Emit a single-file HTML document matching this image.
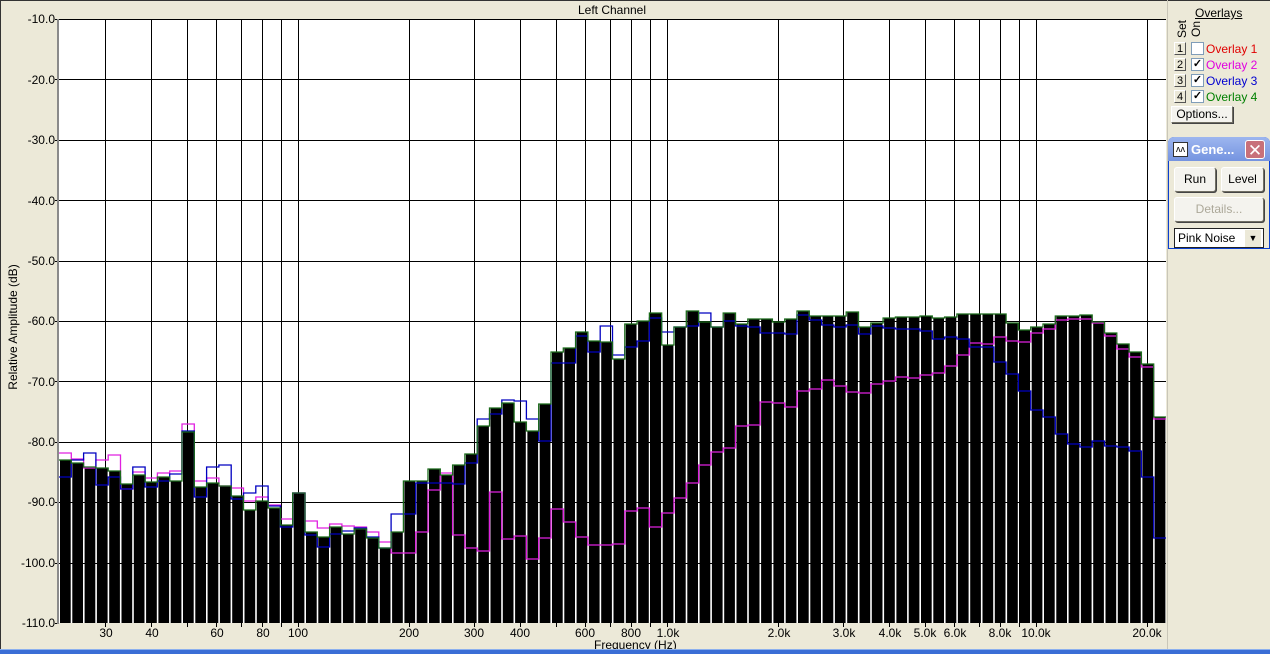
<!DOCTYPE html>
<html><head><meta charset="utf-8"><style>
body{margin:0;width:1270px;height:653px;overflow:hidden;background:#ece9d8;font-family:"Liberation Sans",sans-serif;position:relative}
.a{position:absolute}
.btn{position:absolute;background:#f4f3ee;border:1px solid #fff;border-right-color:#716f64;border-bottom-color:#716f64;box-shadow:1px 1px 0 #444;font-size:12px;text-align:center;box-sizing:border-box;color:#000}
.yl{position:absolute;right:1215px;font-size:12px;width:60px;text-align:right}
.xl{position:absolute;top:626px;font-size:12px;transform:translateX(-50%)}
.ov{position:absolute;left:1206px;font-size:12px}
.cb{position:absolute;left:1191px;width:11px;height:11px;background:#fff;border:1px solid #7f9db9;font-size:11px;line-height:10px;text-align:center;font-weight:bold}
.sb{position:absolute;left:1174px;width:12px;height:13px;background:#ece9d8;border:1px solid #fff;border-right-color:#555;border-bottom-color:#555;font-size:11px;line-height:12px;text-align:center;box-sizing:border-box}
</style></head><body>
<div class="a" style="left:0;top:0;width:1270px;height:1px;background:#333"></div>
<div class="a" style="left:0;top:0;width:1px;height:653px;background:#333"></div>
<div class="a" style="left:0;top:3px;width:1168px;font-size:12px;text-align:center;padding-left:56px;box-sizing:border-box">Left Channel</div>
<svg class="a" style="left:0;top:0" width="1168" height="653" id="s"></svg>
<div class="yl" style="top:12px">-10.0</div><div class="yl" style="top:73px">-20.0</div><div class="yl" style="top:133px">-30.0</div><div class="yl" style="top:194px">-40.0</div><div class="yl" style="top:254px">-50.0</div><div class="yl" style="top:314px">-60.0</div><div class="yl" style="top:375px">-70.0</div><div class="yl" style="top:435px">-80.0</div><div class="yl" style="top:495px">-90.0</div><div class="yl" style="top:556px">-100.0</div><div class="yl" style="top:616px">-110.0</div>
<div class="a" style="left:-67px;top:320px;width:160px;text-align:center;font-size:12px;transform:rotate(-90deg)">Relative Amplitude (dB)</div>
<div class="xl" style="left:106px">30</div><div class="xl" style="left:152px">40</div><div class="xl" style="left:217px">60</div><div class="xl" style="left:263px">80</div><div class="xl" style="left:298px">100</div><div class="xl" style="left:409px">200</div><div class="xl" style="left:474px">300</div><div class="xl" style="left:520px">400</div><div class="xl" style="left:585px">600</div><div class="xl" style="left:631px">800</div><div class="xl" style="left:668px">1.0k</div><div class="xl" style="left:779px">2.0k</div><div class="xl" style="left:844px">3.0k</div><div class="xl" style="left:890px">4.0k</div><div class="xl" style="left:925px">5.0k</div><div class="xl" style="left:955px">6.0k</div><div class="xl" style="left:1000px">8.0k</div><div class="xl" style="left:1036px">10.0k</div><div class="xl" style="left:1147px">20.0k</div>
<div class="a" style="left:594px;top:638px;font-size:12px">Frequency (Hz)</div>
<div class="a" style="left:0;top:649px;width:1270px;height:4px;background:#3a6ed6;border-top:1px solid #8cb0ee"></div>
<div class="a" style="left:1167px;top:0;width:1px;height:649px;background:#c9c6b8"></div>
<div class="a" style="left:1195px;top:6px;font-size:12px;text-decoration:underline">Overlays</div>
<div class="a" style="left:1172px;top:22px;font-size:12px;transform:rotate(-90deg);transform-origin:center;width:20px;text-align:center">Set</div>
<div class="a" style="left:1186px;top:22px;font-size:12px;transform:rotate(-90deg);width:20px;text-align:center">On</div>
<div class="sb" style="top:42px">1</div><div class="cb" style="top:42px"></div><div class="ov" style="top:42px;color:#e00000">Overlay 1</div>
<div class="sb" style="top:58px">2</div><div class="cb" style="top:58px">✓</div><div class="ov" style="top:58px;color:#e000e0">Overlay 2</div>
<div class="sb" style="top:74px">3</div><div class="cb" style="top:74px">✓</div><div class="ov" style="top:74px;color:#0000d0">Overlay 3</div>
<div class="sb" style="top:90px">4</div><div class="cb" style="top:90px">✓</div><div class="ov" style="top:90px;color:#008000">Overlay 4</div>
<div class="btn" style="left:1171px;top:106px;width:62px;height:17px;line-height:15px">Options...</div>
<div class="a" style="left:1168px;top:137px;width:102px;height:112px;background:#ece9d8;border:1px solid #0a3fd0;border-radius:6px 6px 0 0;box-sizing:border-box"></div>
<div class="a" style="left:1168px;top:137px;width:102px;height:24px;background:linear-gradient(#9db6ef,#7594e0);border-radius:6px 6px 0 0"></div>
<div class="a" style="left:1173px;top:142px;width:13px;height:13px;background:#fff;border:1px solid #333;font-size:9px;line-height:12px;text-align:center">ᴧᴧ</div>
<div class="a" style="left:1191px;top:142px;color:#fff;font-weight:bold;font-size:13px">Gene...</div>
<div class="a" style="left:1245px;top:140px;width:20px;height:19px;background:#c8707a;border:1px solid #fff;border-radius:3px;color:#fff;font-size:17px;line-height:19px;text-align:center;box-sizing:border-box">✕</div>
<div class="btn" style="left:1174px;top:167px;width:42px;height:25px;line-height:23px;border-radius:3px">Run</div>
<div class="btn" style="left:1221px;top:167px;width:43px;height:25px;line-height:23px;border-radius:3px">Level</div>
<div class="btn" style="left:1174px;top:197px;width:90px;height:25px;line-height:23px;color:#aca899;border-radius:3px">Details...</div>
<div class="a" style="left:1174px;top:228px;width:90px;height:20px;background:#fff;border:1px solid #222;box-sizing:border-box;font-size:12px;line-height:19px;padding-left:3px">Pink Noise</div>
<div class="a" style="left:1245px;top:230px;width:16px;height:17px;background:#ece9d8;font-size:9px;text-align:center;line-height:17px">▼</div>
<script>
var G=[460,463,467,468,471,484,475,482,477,481,432,487,483,486,496,510,501,508,525,493,532,537,527,534,529,538,548,532,481,481,469,475,465,454,426,408,403,422,431,404,352,348,332,341,342,359,324,321,313,345,327,311,322,327,313,324,319,319,322,319,311,316,316,316,312,327,323,318,317,317,316,318,317,314,314,314,314,323,330,327,324,316,316,315,322,333,344,352,364,417];
var B=[477,460,453,485,477,489,467,487,481,474,431,497,467,465,499,493,486,506,527,493,535,547,534,531,528,537,548,514,514,483,483,483,484,463,419,414,400,401,419,441,363,363,336,352,326,355,347,341,318,332,327,326,313,327,321,326,327,333,333,334,315,320,325,327,325,334,326,328,329,329,331,339,337,339,347,347,362,374,391,410,417,434,444,447,441,446,447,451,477,538];
var M=[453,459,468,460,455,489,472,478,473,471,424,481,478,486,488,501,497,505,519,493,521,528,524,526,527,532,542,553,553,532,490,473,535,548,551,492,539,536,559,538,509,522,537,545,545,544,511,508,527,513,498,483,465,452,448,426,425,402,403,407,391,389,380,386,392,393,384,381,377,378,375,373,366,355,343,344,337,341,342,333,329,320,319,319,323,336,349,357,367,419];
var s='<rect x="59" y="19" width="1107" height="604" fill="#fff"/>';
var X0=59,W=12.3;
function fx(f){return 298+369*Math.log10(f/100)}
var fs=[30,40,50,60,70,80,90,100,200,300,400,500,600,700,800,900,1000,2000,3000,4000,5000,6000,7000,8000,9000,10000,20000];
fs.forEach(function(f){var x=Math.round(fx(f))+.5;s+='<line x1="'+x+'" y1="19" x2="'+x+'" y2="627" stroke="#000"/>'});
for(var k=1;k<10;k++){var y=Math.round(19+k*60.4)+.5;s+='<line x1="55" y1="'+y+'" x2="1166" y2="'+y+'" stroke="#000"/>'}
s+='<line x1="55" y1="19.5" x2="1166" y2="19.5" stroke="#000"/><line x1="55" y1="623.5" x2="59" y2="623.5" stroke="#000"/>';
for(var i=0;i<90;i++){var x=X0+i*W+1;s+='<rect x="'+x.toFixed(1)+'" y="'+G[i]+'" width="'+(W-1.6).toFixed(1)+'" height="'+(623-G[i])+'" fill="#000"/>'}
function step(a,c){var p='M'+X0+' '+a[0];for(var i=0;i<90;i++){var x1=X0+i*W,x2=Math.min(X0+(i+1)*W,1166);p+=' L'+x1.toFixed(1)+' '+a[i]+' L'+x2.toFixed(1)+' '+a[i]}return '<path d="'+p+'" fill="none" stroke="'+c+'" stroke-width="1.3"/>'}
s+=step(M,'#e020e0')+step(B,'#0000c0')+step(G,'#1a6a1a');
s+='<rect x="57" y="19" width="2" height="605" fill="#8a8a8a"/>';
document.getElementById('s').innerHTML=s;
</script>
</body></html>
